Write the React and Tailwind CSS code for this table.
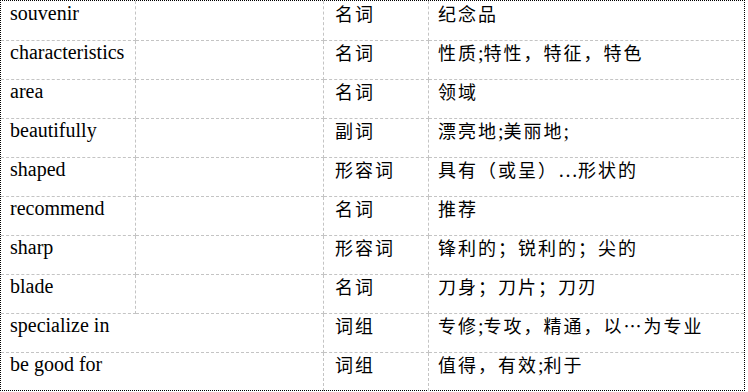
import React from "react";

const rows = [
  ["souvenir", "名词", "纪念品", false],
  ["characteristics", "名词", "性质;特性，特征，特色", false],
  ["area", "名词", "领域", false],
  ["beautifully", "副词", "漂亮地;美丽地;", false],
  ["shaped", "形容词", "具有（或呈）~形状的", false],
  ["recommend", "名词", "推荐", false],
  ["sharp", "形容词", "锋利的；锐利的；尖的", false],
  ["blade", "名词", "刀身；刀片；刀刃", false],
  ["specialize in", "词组", "专修;专攻，精通，以…为专业", true],
  ["be good for", "词组", "值得，有效;利于", true],
];

const CJK = /[\u3000-\u303f\u4e00-\u9fff\uff00-\uffef…]/;

function Mixed({ text }) {
  const parts =
    text.match(/[\u3000-\u303f\u4e00-\u9fff\uff00-\uffef…]+|[^\u3000-\u303f\u4e00-\u9fff\uff00-\uffef…]+/g) || [];
  return (
    <>
      {parts.map((p, i) =>
        CJK.test(p) ? (
          <span
            key={i}
            className="text-[18px] tracking-[2px]"
            style={{ fontFamily: '"Noto Sans CJK SC", sans-serif' }}
          >
            {p}
          </span>
        ) : (
          <span key={i}>{p.replace("~", "\u2026")}</span>
        )
      )}
    </>
  );
}

export default function App() {
  const line = "border-dashed border-[#c4c4c4]";
  return (
    <div className="bg-white w-[748px] h-[392px]">
      <div
        className="w-[745px] h-[391px] border border-dotted border-black text-black text-[20px] leading-[23px] grid grid-cols-[135px_188px_105px_315px] content-start"
        style={{ fontFamily: '"Liberation Serif", "Noto Sans CJK SC", serif' }}
      >
        {rows.map(([en, pos, zh, merged], i) => {
          const last = i === rows.length - 1;
          const rb = last ? "" : "border-b";
          const h = i === 0 ? "h-[40px]" : last ? "h-[38px]" : "h-[39px]";
          const pt = i === 0 ? "pt-[1px]" : "pt-0";
          return (
            <React.Fragment key={i}>
              {merged ? (
                <div className={`col-span-2 ${h} ${rb} border-r ${line} pl-[9px] ${pt} whitespace-nowrap`}>{en}</div>
              ) : (
                <>
                  <div className={`${h} ${rb} border-r ${line} pl-[9px] ${pt} whitespace-nowrap`}>{en}</div>
                  <div className={`${h} ${rb} border-r ${line}`}></div>
                </>
              )}
              <div className={`${h} ${rb} border-r ${line} pl-[11px] ${pt} whitespace-nowrap`}>
                <Mixed text={pos} />
              </div>
              <div className={`${h} ${rb} ${line} pl-[9px] ${pt} whitespace-nowrap`}>
                <Mixed text={zh} />
              </div>
            </React.Fragment>
          );
        })}
      </div>
    </div>
  );
}
